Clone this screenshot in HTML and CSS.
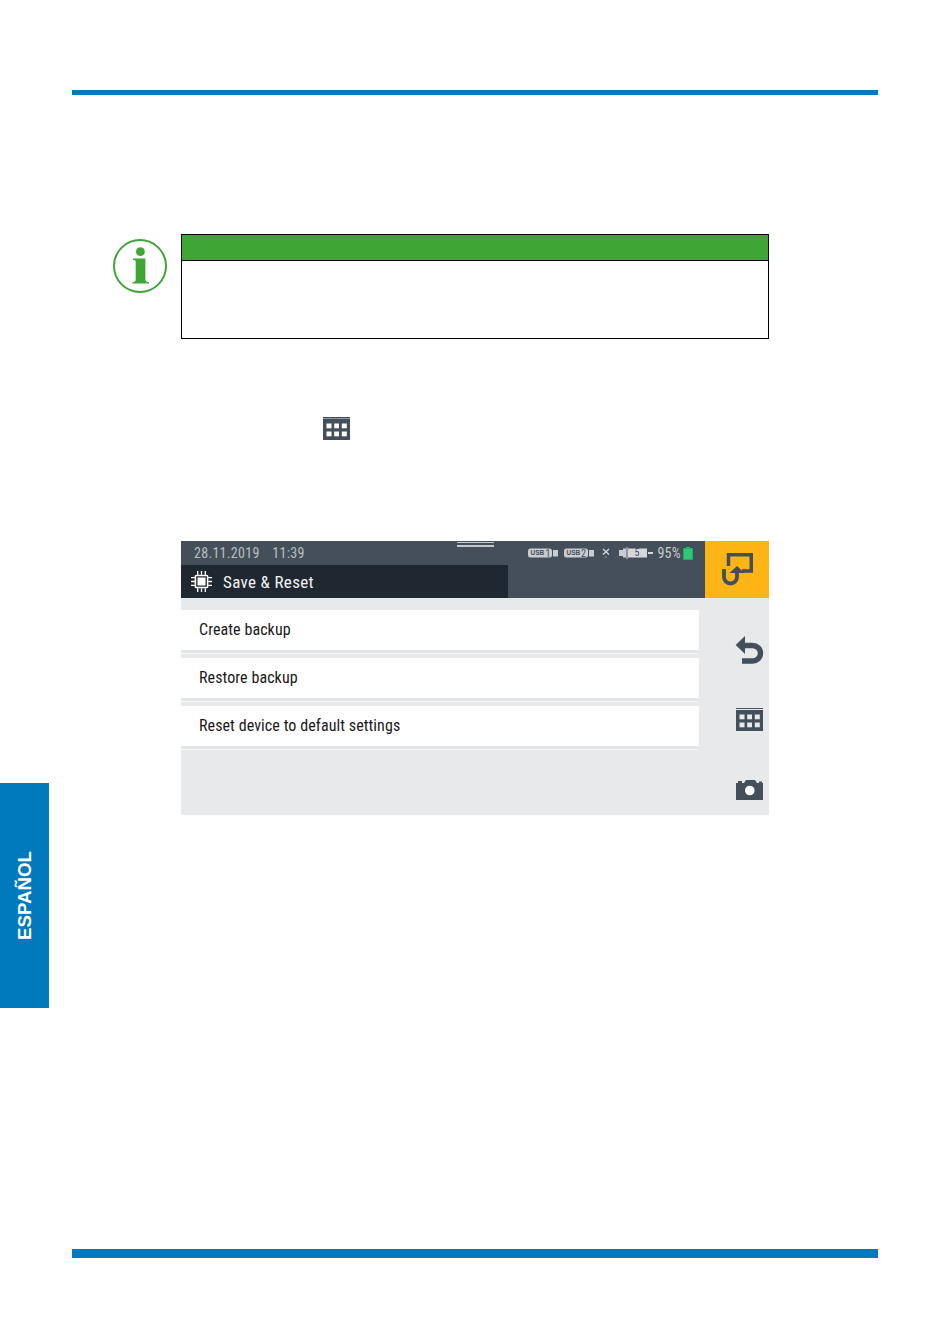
FILE: index.html
```html
<!DOCTYPE html>
<html lang="en">
<head>
    <meta charset="UTF-8">
    <meta name="viewport" content="width=device-width, initial-scale=1.0">
    <title>Save &amp; Reset</title>
    <link rel="stylesheet" href="styles.css">
</head>
<body>
    <div class="rule rule-top"></div>

    <div class="middle">
        <div class="side-col">
            <div class="lang-tab"><span class="lang-label">ESPAÑOL</span></div>
        </div>

        <div class="main">
            <div class="note-row">
                <svg class="info-icon" viewBox="0 0 54 54">
                    <circle cx="27" cy="27" r="26" fill="none" stroke="#3fa535" stroke-width="2"/>
                    <circle cx="27.4" cy="12.7" r="4.4" fill="#3fa535"/>
                    <path d="M20 19.5 H32.4 V41 Q32.4 42.8 36 43.2 V44.5 H19.5 V43.2 Q22.7 42.8 22.7 41 V22.5 Q22.7 21 20 20.8 Z" fill="#3fa535"/>
                </svg>
                <div class="note">
                    <div class="note-head"></div>
                    <div class="note-body"></div>
                </div>
            </div>

            <div class="inline-icon-row">
                <svg class="grid-icon" viewBox="0 0 27 23">
                    <rect width="27" height="23" fill="#434f5b"/>
                    <rect y="1" width="27" height="1" fill="#8f979f"/>
                    <g fill="#fff">
                        <rect x="3.5" y="6.5" width="5" height="4.8"/><rect x="11.2" y="6.5" width="4.8" height="4.8"/><rect x="18.8" y="6.5" width="5" height="4.8"/>
                        <rect x="3.5" y="14.5" width="5" height="4.8"/><rect x="11.2" y="14.5" width="4.8" height="4.8"/><rect x="18.8" y="14.5" width="5" height="4.8"/>
                    </g>
                </svg>
            </div>

            <div class="shot">
                <div class="shot-head">
                    <div class="head-left">
                        <div class="status-line">
                            <span class="clock">28.11.2019&nbsp;&nbsp; 11:39</span>
                            <span class="handle"></span>
                            <div class="status-icons">
                                <svg class="usb" viewBox="0 0 30 10">
                                    <rect y="0.5" width="24" height="9" rx="2.5" fill="#c9ccd0"/>
                                    <text x="2.5" y="7.4" class="usb-text">USB</text>
                                    <text x="17.5" y="8.8" class="usb-num">1</text>
                                    <rect x="25" y="2" width="5" height="6.5" fill="#c9ccd0"/>
                                </svg>
                                <svg class="usb" viewBox="0 0 30 10">
                                    <rect y="0.5" width="24" height="9" rx="2.5" fill="#c9ccd0"/>
                                    <text x="2.5" y="7.4" class="usb-text">USB</text>
                                    <text x="17" y="8.8" class="usb-num">2</text>
                                    <rect x="25" y="2" width="5" height="6.5" fill="#c9ccd0"/>
                                </svg>
                                <svg class="cross" viewBox="0 0 8 10">
                                    <path d="M1 1 L7 6.5 M7 1 L1 6.5" stroke="#d5d8db" stroke-width="1.3"/>
                                    <rect x="3.2" y="8.4" width="1.6" height="1.4" fill="#8f979f"/>
                                </svg>
                                <svg class="charge" viewBox="0 0 34 12">
                                    <rect y="3" width="4" height="6" fill="#c9ccd0"/>
                                    <rect x="4" y="1.5" width="3" height="9" fill="#c9ccd0"/>
                                    <rect x="7" y="0" width="2" height="12" fill="#8f979f"/>
                                    <rect x="9" y="1.5" width="19" height="9" fill="#d5d8db"/>
                                    <text x="15.5" y="9.4" class="usb-num">5</text>
                                    <rect x="29" y="5" width="5" height="2" fill="#d5d8db"/>
                                </svg>
                                <span class="percent">95%</span>
                                <svg class="battery" viewBox="0 0 10 13">
                                    <rect x="3" width="4" height="1.5" fill="#23c26b"/>
                                    <rect x="0.5" y="1.5" width="9" height="11" fill="#34c47a" stroke="#14b45c"/>
                                </svg>
                            </div>
                        </div>
                        <div class="title-tab">
                            <svg class="chip" viewBox="0 0 22 22">
                                <g stroke="#fff" stroke-width="1.4">
                                    <path d="M7 0 V4 M11 0 V4 M15 0 V4 M7 18 V22 M11 18 V22 M15 18 V22"/>
                                    <path d="M0 7 H4 M0 11 H4 M0 15 H4 M18 7 H22 M18 11 H22 M18 15 H22"/>
                                </g>
                                <rect x="4.6" y="4.6" width="12.8" height="12.8" rx="1" fill="none" stroke="#fff" stroke-width="1.6"/>
                                <rect x="6.8" y="6.8" width="8.4" height="8.4" fill="#fff"/>
                            </svg>
                            <span class="title">Save &amp; Reset</span>
                        </div>
                    </div>
                    <div class="head-action">
                        <svg class="action-icon" viewBox="0 0 32 34">
                            <path d="M6.5 13 V1.75 H29.25 V18 H20" fill="none" stroke="#434f5b" stroke-width="3.5"/>
                            <path d="M15 13 L22.5 20 H7.5 Z" fill="#434f5b"/>
                            <path d="M2 16 V24 a6.5 6.5 0 0 0 13 0 V18" fill="none" stroke="#434f5b" stroke-width="3.8"/>
                        </svg>
                    </div>
                </div>

                <div class="shot-body">
                    <div class="list">
                        <div class="list-row"><span class="row-text">Create backup</span></div>
                        <div class="list-row"><span class="row-text">Restore backup</span></div>
                        <div class="list-row"><span class="row-text">Reset device to default settings</span></div>
                    </div>
                    <div class="tools">
                        <svg class="tool-undo" viewBox="0 0 30 30">
                            <path d="M8 10.5 H17.5 a8 7.75 0 0 1 0 15.5 H7" fill="none" stroke="#434f5b" stroke-width="5.4"/>
                            <path d="M0.7 10 L10 1 V19 Z" fill="#434f5b"/>
                        </svg>
                        <svg class="tool-grid" viewBox="0 0 27 23">
                            <rect width="27" height="23" fill="#434f5b"/>
                            <rect y="1" width="27" height="1" fill="#e8e9eb"/>
                            <g fill="#e8e9eb">
                                <rect x="3.5" y="6.5" width="5" height="4.8"/><rect x="11.2" y="6.5" width="4.8" height="4.8"/><rect x="18.8" y="6.5" width="5" height="4.8"/>
                                <rect x="3.5" y="14.5" width="5" height="4.8"/><rect x="11.2" y="14.5" width="4.8" height="4.8"/><rect x="18.8" y="14.5" width="5" height="4.8"/>
                            </g>
                        </svg>
                        <svg class="tool-camera" viewBox="0 0 27 20">
                            <path d="M0 20 V3 H2 V1 H6 V3 H8 L10 0 H19 L21 3 H23 V1.5 H26 V3 H27 V20 Z" fill="#434f5b"/>
                            <circle cx="13.8" cy="10.5" r="4.8" fill="#fff"/>
                        </svg>
                    </div>
                </div>
            </div>
        </div>
    </div>

    <div class="rule rule-bottom"></div>
</body>
</html>
```

FILE: styles.css
```css
body {
    margin: 0;
    padding: 90px 0 0;
    background-color: #fff;
    font-family: Roboto, "Liberation Sans", sans-serif;
}

.rule {
    margin: 0 72px;
    background-color: #0079bd;
}

.rule-top {
    height: 5px;
}

.rule-bottom {
    height: 9px;
}

.middle {
    display: flex;
    height: 1154px;
}

/* side tab */
.side-col {
    width: 49px;
    flex: none;
}

.lang-tab {
    display: flex;
    align-items: center;
    justify-content: center;
    width: 49px;
    height: 225px;
    margin-top: 688px;
    background-color: #0079bd;
}

.lang-label {
    writing-mode: vertical-rl;
    transform: rotate(180deg);
    margin-left: 1px;
    font-family: "Liberation Sans", Arial, sans-serif;
    font-weight: bold;
    font-size: 18.7px;
    color: #fff;
}

.main {
    margin-left: 64px;
}

/* note box */
.note-row {
    display: flex;
    gap: 14px;
    margin-top: 139px;
}

.info-icon {
    width: 54px;
    height: 54px;
    margin-top: 5px;
    flex: none;
}

.note {
    width: 588px;
    height: 105px;
    box-sizing: border-box;
    border: 1px solid #000;
}

.note-head {
    height: 25px;
    border-bottom: 1px solid #000;
    background-color: #3fa535;
}

.inline-icon-row {
    margin: 78px 0 0 210px;
    height: 23px;
}

.grid-icon {
    display: block;
    width: 27px;
    height: 23px;
}

/* device screen */
.shot {
    width: 588px;
    height: 274px;
    margin: 101px 0 0 68px;
    display: flex;
    flex-direction: column;
    background-color: #e8e9eb;
    font-stretch: condensed;
}

.shot-head {
    display: flex;
    height: 57px;
    background-color: #454f59;
}

.head-left {
    flex: 1;
    display: flex;
    flex-direction: column;
}

.status-line {
    position: relative;
    height: 24px;
    display: flex;
    align-items: center;
    padding-left: 13px;
}

.clock {
    font-size: 14px;
    letter-spacing: 0.3px;
    word-spacing: 0.7px;
    color: #b9bec3;
    white-space: nowrap;
}

.handle {
    position: absolute;
    left: 276px;
    top: 1px;
    width: 37px;
    height: 2px;
    border-bottom: 2px solid #c4c8cc;
    border-top: 1px solid #c4c8cc;
}

.status-icons {
    display: flex;
    align-items: center;
    margin-left: auto;
    padding-right: 12px;
}

.usb {
    width: 30px;
    height: 10px;
    margin-right: 6px;
}

.usb-text {
    font-family: "Liberation Sans", sans-serif;
    font-weight: bold;
    font-size: 6.5px;
    fill: #454f59;
}

.usb-num {
    font-size: 10px;
    fill: #454f59;
}

.cross {
    width: 8px;
    height: 10px;
    margin: 0 9px 0 2px;
}

.charge {
    width: 34px;
    height: 12px;
}

.percent {
    margin-left: 4px;
    font-size: 14px;
    letter-spacing: 0.3px;
    color: #c9ccd0;
}

.battery {
    width: 10px;
    height: 13px;
    margin-left: 2px;
}

.title-tab {
    display: flex;
    align-items: center;
    width: 327px;
    height: 33px;
    padding-left: 10px;
    box-sizing: border-box;
    background-color: #1f2830;
}

.chip {
    width: 21px;
    height: 21px;
    flex: none;
}

.title {
    margin-left: 11px;
    font-size: 17px;
    letter-spacing: 0.35px;
    color: #f2f3f4;
    white-space: nowrap;
}

.head-action {
    display: flex;
    align-items: flex-start;
    justify-content: center;
    width: 64px;
    padding-left: 2px;
    box-sizing: border-box;
    flex: none;
    background-color: #fdb415;
}

.action-icon {
    width: 32px;
    height: 34px;
    margin-top: 12px;
}

.shot-body {
    flex: 1;
    display: flex;
}

/* menu rows */
.list {
    width: 518px;
    padding-top: 12px;
    flex: none;
}

.list-row {
    display: flex;
    align-items: center;
    box-sizing: border-box;
    height: 40px;
    margin-bottom: 8px;
    padding: 0 0 2px 18px;
    background-color: #fff;
    box-shadow: 0 3px 0 #e3e4e6, 0 4px 0 #f6f7f7;
}

.row-text {
    font-size: 16px;
    letter-spacing: 0.08px;
    color: #1a1a1a;
    white-space: nowrap;
}

.tools {
    flex: 1;
    position: relative;
}

.tool-undo,
.tool-grid,
.tool-camera {
    position: absolute;
    display: block;
}

.tool-undo {
    left: 36px;
    top: 37px;
    width: 30px;
    height: 30px;
}

.tool-grid {
    left: 37px;
    top: 110px;
    width: 27px;
    height: 23px;
}

.tool-camera {
    left: 37px;
    top: 182px;
    width: 27px;
    height: 20px;
}
```
